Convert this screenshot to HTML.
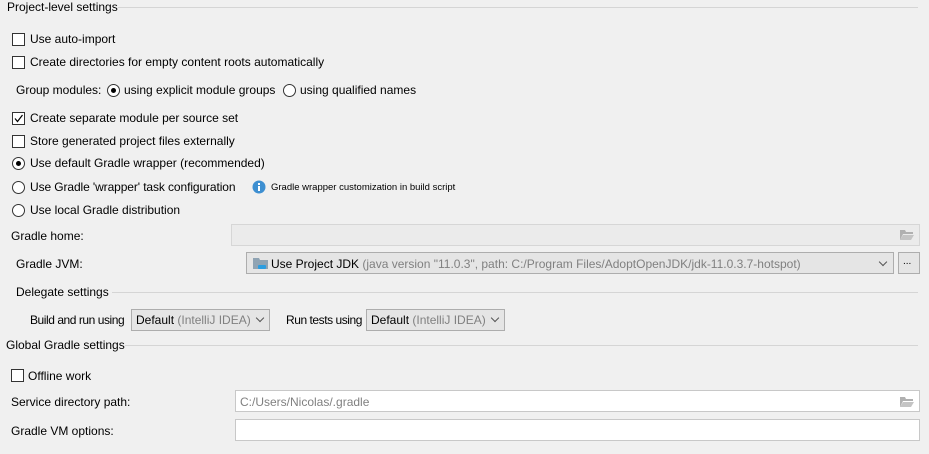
<!DOCTYPE html>
<html><head><style>
body{margin:0;width:929px;height:454px;background:#f0f0f0;font-family:"Liberation Sans",sans-serif;font-size:12px;color:#000;position:relative;overflow:hidden}
.a{position:absolute;white-space:nowrap;line-height:14px}
.cb{position:absolute;width:11px;height:11px;border:1px solid #333;background:#fff}
.rb{position:absolute;width:11px;height:11px;border:1px solid #333;border-radius:50%;background:#fff}
.rb.on::after{content:"";position:absolute;left:3px;top:3px;width:5px;height:5px;border-radius:50%;background:#000}
.ln{position:absolute;height:1px;background:#d5d5d5}
.f{position:absolute;box-sizing:border-box;border:1px solid #c8c8c8;background:#fff}
.cmb{position:absolute;box-sizing:border-box;border:1px solid #adadad;background:#e5e5e5}
.g{color:#808080}
.chev{position:absolute;width:5px;height:5px;border-right:1px solid #555;border-bottom:1px solid #555;transform:rotate(45deg)}
</style></head><body>
<div class="a" style="left:7px;top:0px">Project-level settings</div>
<div class="ln" style="left:118px;right:11px;top:7px"></div>

<div class="cb" style="left:12px;top:33px"></div><div class="a" style="left:30px;top:32px">Use auto-import</div>
<div class="cb" style="left:12px;top:56px"></div><div class="a" style="left:30px;top:55px">Create directories for empty content roots automatically</div>

<div class="a" style="left:16px;top:83px">Group modules:</div>
<div class="rb on" style="left:107px;top:84px"></div><div class="a" style="left:124px;top:83px">using explicit module groups</div>
<div class="rb" style="left:283px;top:84px"></div><div class="a" style="left:300px;top:83px">using qualified names</div>

<div class="cb" style="left:12px;top:112px"></div>
<svg style="position:absolute;left:13px;top:113px" width="11" height="11"><path d="M2 5.5 L4.5 8.5 L9.5 2" stroke="#000" fill="none" stroke-width="1.2"/></svg>
<div class="a" style="left:30px;top:111px">Create separate module per source set</div>
<div class="cb" style="left:12px;top:135px"></div><div class="a" style="left:30px;top:134px">Store generated project files externally</div>
<div class="rb on" style="left:12px;top:157px"></div><div class="a" style="left:30px;top:156px">Use default Gradle wrapper (recommended)</div>
<div class="rb" style="left:12px;top:181px"></div><div class="a" style="left:30px;top:180px;letter-spacing:-0.1px">Use Gradle 'wrapper' task configuration</div>
<svg style="position:absolute;left:252px;top:180px" width="14" height="14"><circle cx="7" cy="7" r="6.5" fill="#3d8fd1"/><rect x="6" y="6" width="2" height="5" fill="#fff"/><rect x="6" y="3" width="2" height="2" fill="#fff"/></svg>
<div class="a" style="left:271px;top:181px;font-size:9.5px">Gradle wrapper customization in build script</div>
<div class="rb" style="left:12px;top:204px"></div><div class="a" style="left:30px;top:203px">Use local Gradle distribution</div>

<div class="a" style="left:11px;top:229px">Gradle home:</div>
<div class="f" style="left:231px;top:224px;width:689px;height:22px;background:#ebebeb;border-color:#d6d6d6"></div>
<svg style="position:absolute;left:899px;top:229px" width="16" height="12"><path d="M1 1h5l1 2h7v2H4L1 11z" fill="#b0b0b0"/><path d="M4 6h11l-3 5H1z" fill="#c4c4c4"/></svg>

<div class="a" style="left:16px;top:257px">Gradle JVM:</div>
<div class="cmb" style="left:246px;top:252px;width:648px;height:22px"></div>
<svg style="position:absolute;left:253px;top:257px" width="16" height="13"><path d="M0 1h6l1 2h8v9H0z" fill="#8fa3b3"/><rect x="5" y="8" width="8" height="4" rx="1" fill="#2b9de0"/></svg>
<div class="a" style="left:271px;top:257px">Use Project JDK <span class="g">(java version "11.0.3", path: C:/Program Files/AdoptOpenJDK/jdk-11.0.3.7-hotspot)</span></div>
<div class="chev" style="left:880px;top:259px"></div>
<div class="cmb" style="left:898px;top:252px;width:22px;height:22px"></div>
<div class="a" style="left:903px;top:255px;font-size:10px">...</div>

<div class="a" style="left:16px;top:285px">Delegate settings</div>
<div class="ln" style="left:112px;right:11px;top:292px"></div>

<div class="a" style="left:30px;top:313px;letter-spacing:-0.45px">Build and run using</div>
<div class="cmb" style="left:131px;top:309px;width:139px;height:22px"></div>
<div class="a" style="left:136px;top:313px">Default <span class="g">(IntelliJ IDEA)</span></div>
<div class="chev" style="left:257px;top:315px"></div>
<div class="a" style="left:286px;top:313px;letter-spacing:-0.45px">Run tests using</div>
<div class="cmb" style="left:366px;top:309px;width:139px;height:22px"></div>
<div class="a" style="left:371px;top:313px">Default <span class="g">(IntelliJ IDEA)</span></div>
<div class="chev" style="left:492px;top:315px"></div>

<div class="a" style="left:6px;top:338px">Global Gradle settings</div>
<div class="ln" style="left:125px;right:11px;top:345px"></div>

<div class="cb" style="left:11px;top:369px"></div><div class="a" style="left:28px;top:369px">Offline work</div>

<div class="a" style="left:11px;top:395px">Service directory path:</div>
<div class="f" style="left:235px;top:390px;width:685px;height:22px"></div>
<div class="a g" style="left:240px;top:395px">C:/Users/Nicolas/.gradle</div>
<svg style="position:absolute;left:899px;top:396px" width="16" height="12"><path d="M1 1h5l1 2h7v2H4L1 11z" fill="#b0b0b0"/><path d="M4 6h11l-3 5H1z" fill="#c4c4c4"/></svg>

<div class="a" style="left:11px;top:424px">Gradle VM options:</div>
<div class="f" style="left:235px;top:419px;width:685px;height:22px"></div>
</body></html>
